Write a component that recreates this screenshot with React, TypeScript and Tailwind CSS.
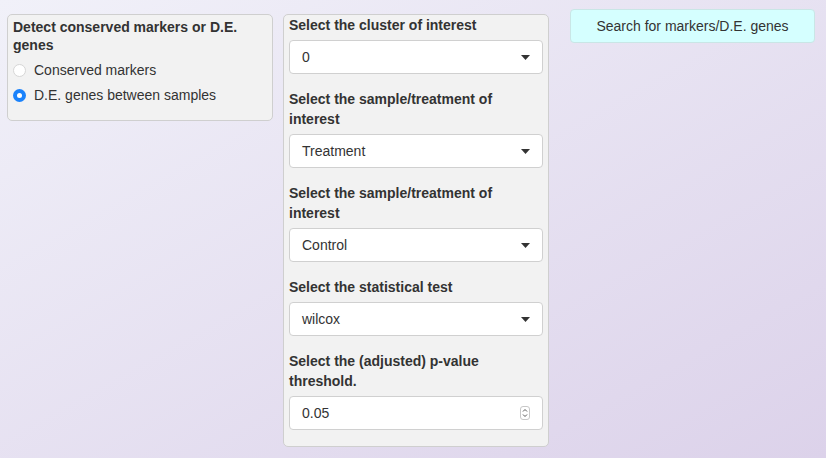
import React from "react";

const font = { fontFamily: '"Liberation Sans", Arial, sans-serif' };

function Caret() {
  return (
    <svg width="9" height="5" viewBox="0 0 9 5" className="shrink-0">
      <path d="M0 0 L9 0 L4.5 5 Z" fill="#333" />
    </svg>
  );
}

function Spinner() {
  return (
    <div className="flex h-[14px] w-[10px] flex-col items-center justify-center rounded-[3px] border border-[#c8c8c8] bg-white">
      <svg width="8" height="12" viewBox="0 0 8 12">
        <path d="M2 4.5 L4 2.5 L6 4.5" fill="none" stroke="#555" strokeWidth="1" />
        <path d="M2 7.5 L4 9.5 L6 7.5" fill="none" stroke="#555" strokeWidth="1" />
      </svg>
    </div>
  );
}

function SelectBox({ value }: { value: string }) {
  return (
    <div className="flex h-[34px] items-center justify-between rounded-[4px] border border-[#d0d0d0] bg-white pl-[12px] pr-[12px] text-[14px] text-[#333]">
      <span>{value}</span>
      <Caret />
    </div>
  );
}

function Field({ label, children }: { label: string; children: React.ReactNode }) {
  return (
    <div className="mb-[15px]">
      <div className="mb-[5px] text-[14px] font-bold leading-[20px] text-[#333]">{label}</div>
      {children}
    </div>
  );
}

export default function App() {
  return (
    <div
      style={font}
      className="flex h-[458px] w-[826px] items-start bg-gradient-to-br from-[#f1f1f9] to-[#dcd2ea] text-[#333]"
    >
      {/* radio panel */}
      <div className="ml-[7px] mt-[14px] w-[266px] rounded-[5px] border border-[#cfcfcf] bg-[#f2f2f2] px-[5px] pb-[16px] pt-[3px]">
        <div className="text-[14px] font-bold leading-[18px]">Detect conserved markers or D.E. genes</div>
        <div className="mt-[7px] flex flex-col gap-[7px] text-[14px]">
          <div className="flex h-[18px] items-center gap-[8px]">
            <span className="h-[13px] w-[13px] rounded-full border border-[#d6d6d6] bg-white" />
            <span>Conserved markers</span>
          </div>
          <div className="flex h-[18px] items-center gap-[8px]">
            <span className="flex h-[13px] w-[13px] items-center justify-center rounded-full bg-[#1a82fb]">
              <span className="h-[5px] w-[5px] rounded-full bg-white" />
            </span>
            <span>D.E. genes between samples</span>
          </div>
        </div>
      </div>

      {/* selects panel */}
      <div className="ml-[10px] mt-[14px] w-[266px] rounded-[5px] border border-[#cfcfcf] bg-[#f2f2f2] px-[5px] pb-[1px]">
        <Field label="Select the cluster of interest">
          <SelectBox value="0" />
        </Field>
        <Field label="Select the sample/treatment of interest">
          <SelectBox value="Treatment" />
        </Field>
        <Field label="Select the sample/treatment of interest">
          <SelectBox value="Control" />
        </Field>
        <Field label="Select the statistical test">
          <SelectBox value="wilcox" />
        </Field>
        <Field label="Select the (adjusted) p-value threshold.">
          <div className="flex h-[34px] items-center justify-between rounded-[4px] border border-[#d0d0d0] bg-white pl-[12px] pr-[12px] text-[14px]">
            <span>0.05</span>
            <Spinner />
          </div>
        </Field>
      </div>

      <button className="ml-[21px] mt-[9px] h-[34px] w-[245px] rounded-[4px] border border-[#c9e6e6] bg-[#d5ffff] text-[14px] text-[#333]">
        Search for markers/D.E. genes
      </button>
    </div>
  );
}
